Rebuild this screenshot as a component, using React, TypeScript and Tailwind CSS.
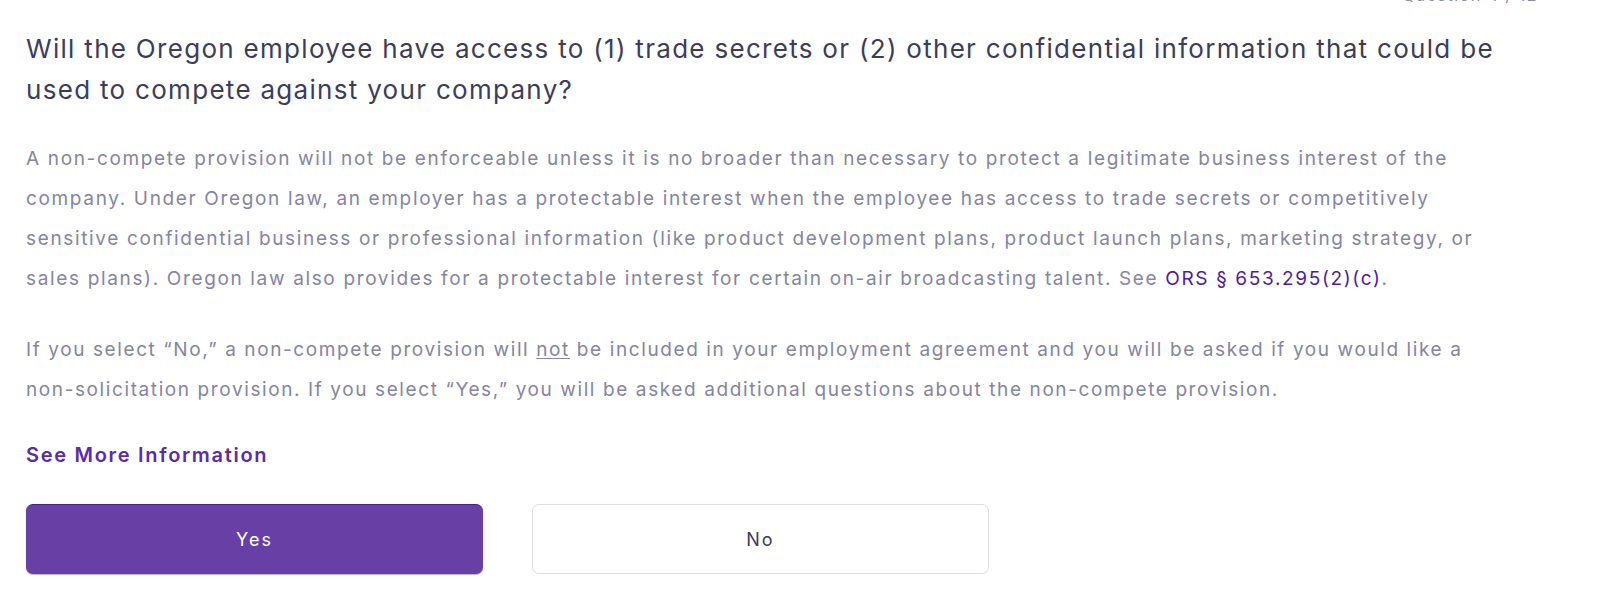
import React from "react";

const font = { fontFamily: "Inter, 'Noto Sans', sans-serif" };

export default function App() {
  return (
    <div className="min-h-screen w-full bg-white text-[#3b3d5a]" style={font}>
      {/* progress label, cut off at the top edge of the screenshot */}
      <div className="flex justify-end pr-[62px] h-[4px] overflow-hidden">
        <span className="-mt-[14px] text-[16px] leading-[18px] text-[#8a8ba6] tracking-[1.5px]">
          Question 4 / 12
        </span>
      </div>

      <div className="pl-[26px] pr-[40px]">
        <h1 className="pt-[24px] text-[26px] leading-[41px] font-normal tracking-[1.3px] text-[#3b3d5a] whitespace-nowrap">
          Will the Oregon employee have access to (1) trade secrets or (2) other confidential information that could be
          <br />
          used to compete against your company?
        </h1>

        <p className="mt-[29px] text-[19px] leading-[40px] tracking-[1.65px] text-[#8485a2] whitespace-nowrap">
          A non-compete provision will not be enforceable unless it is no broader than necessary to protect a legitimate
          business interest of the
          <br />
          company. Under Oregon law, an employer has a protectable interest when the employee has access to trade secrets
          or competitively
          <br />
          sensitive confidential business or professional information (like product development plans, product launch
          plans, marketing strategy, or
          <br />
          sales plans). Oregon law also provides for a protectable interest for certain on-air broadcasting talent. See{" "}
          <a href="#" className="text-[#4c1d9c]">
            ORS § 653.295(2)(c)
          </a>
          .
        </p>

        <p className="mt-[31px] text-[19px] leading-[40px] tracking-[1.6px] text-[#8485a2] whitespace-nowrap">
          If you select “No,” a non-compete provision will <span className="underline underline-offset-2">not</span> be
          included in your employment agreement and you will be asked if you would like a
          <br />
          non-solicitation provision. If you select “Yes,” you will be asked additional questions about the non-compete
          provision.
        </p>

        <div className="mt-[31px] leading-[28px]">
          <a href="#" className="text-[20px] font-semibold text-[#5a2ca6] tracking-[1.7px]">
            See More Information
          </a>
        </div>

        <div className="mt-[34px] flex gap-[49px]">
          <button className="w-[457px] h-[70px] rounded-[7px] bg-[#673fa5] border-t border-[#4a1f8c] shadow-[0_1px_1px_rgba(60,30,110,0.35)] text-white text-[18px] tracking-[2px]">
            Yes
          </button>
          <button className="w-[457px] h-[70px] rounded-[7px] bg-white border border-[#dcdbe6] text-[#3b3d5a] text-[18px] tracking-[2px]">
            No
          </button>
        </div>
      </div>
    </div>
  );
}
